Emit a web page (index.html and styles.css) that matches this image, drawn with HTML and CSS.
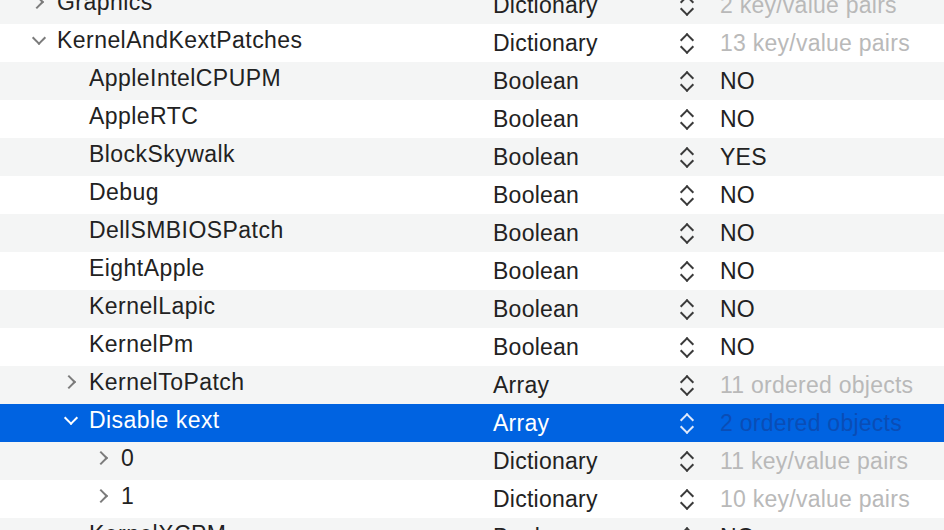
FILE: index.html
```html
<!DOCTYPE html>
<html lang="en">
<head>
  <meta charset="UTF-8">
  <title>config.plist</title>
  <link rel="stylesheet" href="styles.css">
</head>
<body>

<div class="plist">
  <div class="row"><div class="key lv1"><span class="tw closed"></span>Graphics</div><div class="type">Dictionary</div><div class="step"></div><div class="val dim">2 key/value pairs</div></div>
  <div class="row"><div class="key lv1"><span class="tw open"></span>KernelAndKextPatches</div><div class="type">Dictionary</div><div class="step"></div><div class="val dim">13 key/value pairs</div></div>
  <div class="row"><div class="key lv2"><span class="tw"></span>AppleIntelCPUPM</div><div class="type">Boolean</div><div class="step"></div><div class="val">NO</div></div>
  <div class="row"><div class="key lv2"><span class="tw"></span>AppleRTC</div><div class="type">Boolean</div><div class="step"></div><div class="val">NO</div></div>
  <div class="row"><div class="key lv2"><span class="tw"></span>BlockSkywalk</div><div class="type">Boolean</div><div class="step"></div><div class="val">YES</div></div>
  <div class="row"><div class="key lv2"><span class="tw"></span>Debug</div><div class="type">Boolean</div><div class="step"></div><div class="val">NO</div></div>
  <div class="row"><div class="key lv2"><span class="tw"></span>DellSMBIOSPatch</div><div class="type">Boolean</div><div class="step"></div><div class="val">NO</div></div>
  <div class="row"><div class="key lv2"><span class="tw"></span>EightApple</div><div class="type">Boolean</div><div class="step"></div><div class="val">NO</div></div>
  <div class="row"><div class="key lv2"><span class="tw"></span>KernelLapic</div><div class="type">Boolean</div><div class="step"></div><div class="val">NO</div></div>
  <div class="row"><div class="key lv2"><span class="tw"></span>KernelPm</div><div class="type">Boolean</div><div class="step"></div><div class="val">NO</div></div>
  <div class="row"><div class="key lv2"><span class="tw closed"></span>KernelToPatch</div><div class="type">Array</div><div class="step"></div><div class="val dim">11 ordered objects</div></div>
  <div class="row selected"><div class="key lv2"><span class="tw open"></span>Disable kext</div><div class="type">Array</div><div class="step"></div><div class="val dim">2 ordered objects</div></div>
  <div class="row"><div class="key lv3"><span class="tw closed"></span>0</div><div class="type">Dictionary</div><div class="step"></div><div class="val dim">11 key/value pairs</div></div>
  <div class="row"><div class="key lv3"><span class="tw closed"></span>1</div><div class="type">Dictionary</div><div class="step"></div><div class="val dim">10 key/value pairs</div></div>
  <div class="row"><div class="key lv2"><span class="tw"></span>KernelXCPM</div><div class="type">Boolean</div><div class="step"></div><div class="val">NO</div></div>
</div>

</body>
</html>
```

FILE: styles.css
```css
body { margin: 0; background: #fff; font-family: "Liberation Sans", Arial, sans-serif; color: #222; overflow: hidden; }

.plist { margin-top: -14px; }
.row { display: flex; align-items: center; height: 38px; font-size: 23px; letter-spacing: 0.25px; }
.row:nth-child(odd) { background: #f4f5f5; }
.row.selected { background: #0063e1; color: #fff; }

.key { width: 493px; box-sizing: border-box; display: flex; align-items: center; position: relative; top: -3px; white-space: nowrap; letter-spacing: 0.45px; }
.lv1 { padding-left: 31px; }
.lv2 { padding-left: 63px; }
.lv3 { padding-left: 95px; }

/* disclosure triangle */
.tw { width: 26px; height: 20px; flex: none; position: relative; }
.tw.closed::before, .tw.open::before {
  content: ""; position: absolute; width: 8px; height: 8px;
  border-right: 2.5px solid #7b7b7b; border-bottom: 2.5px solid #7b7b7b;
}
.tw.closed::before { left: 1px; top: 5px; transform: rotate(-45deg); }
.tw.open::before { left: 3px; top: 3px; transform: rotate(45deg); }
.selected .tw::before { border-color: #fff; }

.type { width: 180px; }

/* popup stepper arrows */
.step { width: 47px; height: 38px; position: relative; }
.step::before, .step::after {
  content: ""; position: absolute; left: 9px; width: 8px; height: 8px;
  border-left: 2.5px solid #3a3a3a; border-top: 2.5px solid #3a3a3a;
}
.step::before { top: 11px; transform: rotate(45deg); }
.step::after { top: 18px; transform: rotate(225deg); }
.selected .step::before, .selected .step::after { border-color: #dfe9fb; }

.val { white-space: nowrap; }
.val.dim { color: #b9b9b9; }
.selected .val.dim { color: #0a4db6; }
```
